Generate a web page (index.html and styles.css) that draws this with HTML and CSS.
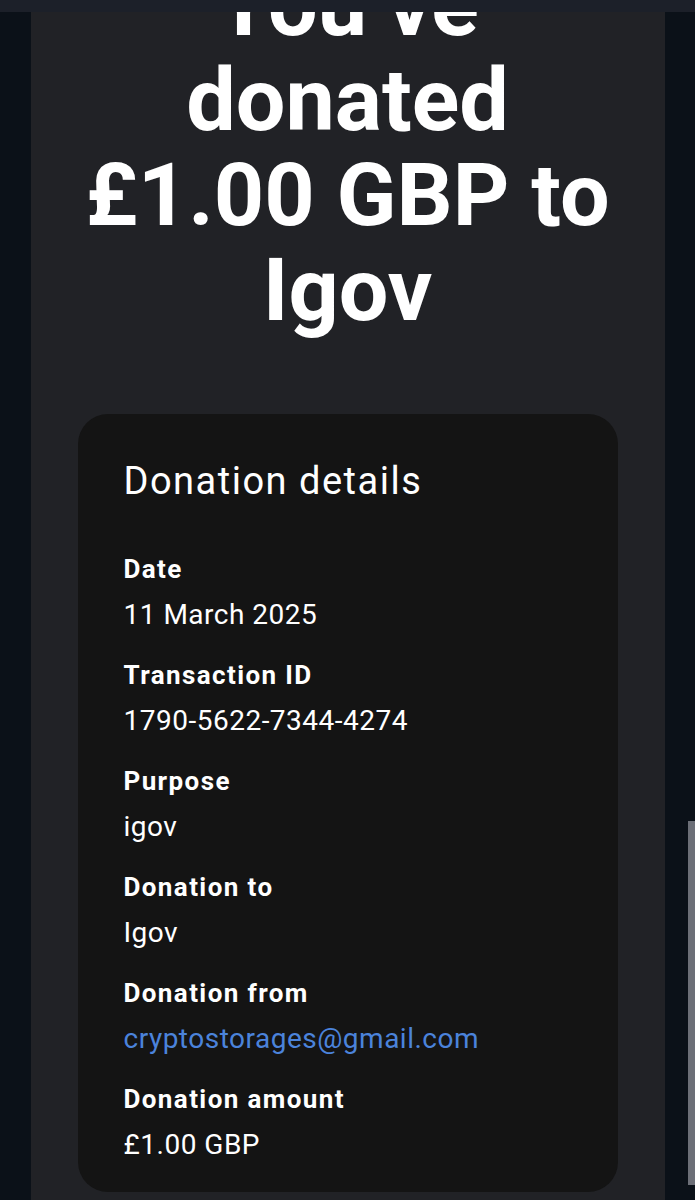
FILE: index.html
```html
<!DOCTYPE html>
<html lang="en">
<head>
    <meta charset="UTF-8">
    <meta name="viewport" content="width=device-width, initial-scale=1.0">
    <title>Donation receipt</title>
    <link rel="stylesheet" href="styles.css">
</head>
<body>
    <div class="topbar"></div>
    <main class="page">
        <h1 class="title">You’ve donated £1.00 GBP to Igov</h1>
        <section class="card">
            <h2 class="card-title">Donation details</h2>
            <dl class="details">
                <div class="item">
                    <dt>Date</dt>
                    <dd>11 March 2025</dd>
                </div>
                <div class="item">
                    <dt>Transaction ID</dt>
                    <dd>1790-5622-7344-4274</dd>
                </div>
                <div class="item">
                    <dt>Purpose</dt>
                    <dd>igov</dd>
                </div>
                <div class="item">
                    <dt>Donation to</dt>
                    <dd>Igov</dd>
                </div>
                <div class="item">
                    <dt>Donation from</dt>
                    <dd><a href="mailto:cryptostorages@gmail.com">cryptostorages@gmail.com</a></dd>
                </div>
                <div class="item">
                    <dt>Donation amount</dt>
                    <dd>£1.00 GBP</dd>
                </div>
            </dl>
        </section>
    </main>
    <div class="scrollbar"></div>
</body>
</html>
```

FILE: styles.css
```css
body {
    font-family: Roboto, "Liberation Sans", Arial, sans-serif;
    background-color: #0b1118;
    color: #fff;
    margin: 0;
    padding: 0;
}
.topbar {
    position: fixed;
    top: 0;
    left: 0;
    right: 0;
    height: 12px;
    background: #1c2029;
    z-index: 2;
}
.page {
    width: 540px;
    margin: 0 auto;
    padding: 0 47px 40px;
    background: #212226;
    min-height: 100vh;
}
.title {
    margin: -43px 0 77px;
    font-size: 88px;
    line-height: 95px;
    font-weight: 700;
    text-align: center;
}
.card {
    background: #141414;
    border-radius: 30px;
    padding: 44px 46px 27px;
}
.card-title {
    margin: 0 0 47px;
    font-size: 38px;
    line-height: 46px;
    font-weight: 400;
    letter-spacing: 1.5px;
}
.details {
    margin: 0;
}
.item {
    display: flex;
    flex-direction: column;
    gap: 8px;
    margin-bottom: 22px;
}
.item:last-child {
    margin-bottom: 0;
}
dt {
    font-size: 26px;
    line-height: 36px;
    font-weight: 700;
    letter-spacing: 1.4px;
}
dd {
    margin: 0;
    font-size: 28px;
    line-height: 40px;
    letter-spacing: 0.5px;
}
dd a {
    color: #4b83db;
    text-decoration: none;
}
.scrollbar {
    position: fixed;
    right: 0;
    top: 821px;
    width: 7px;
    height: 364px;
    background: #6c6f77;
}
```
